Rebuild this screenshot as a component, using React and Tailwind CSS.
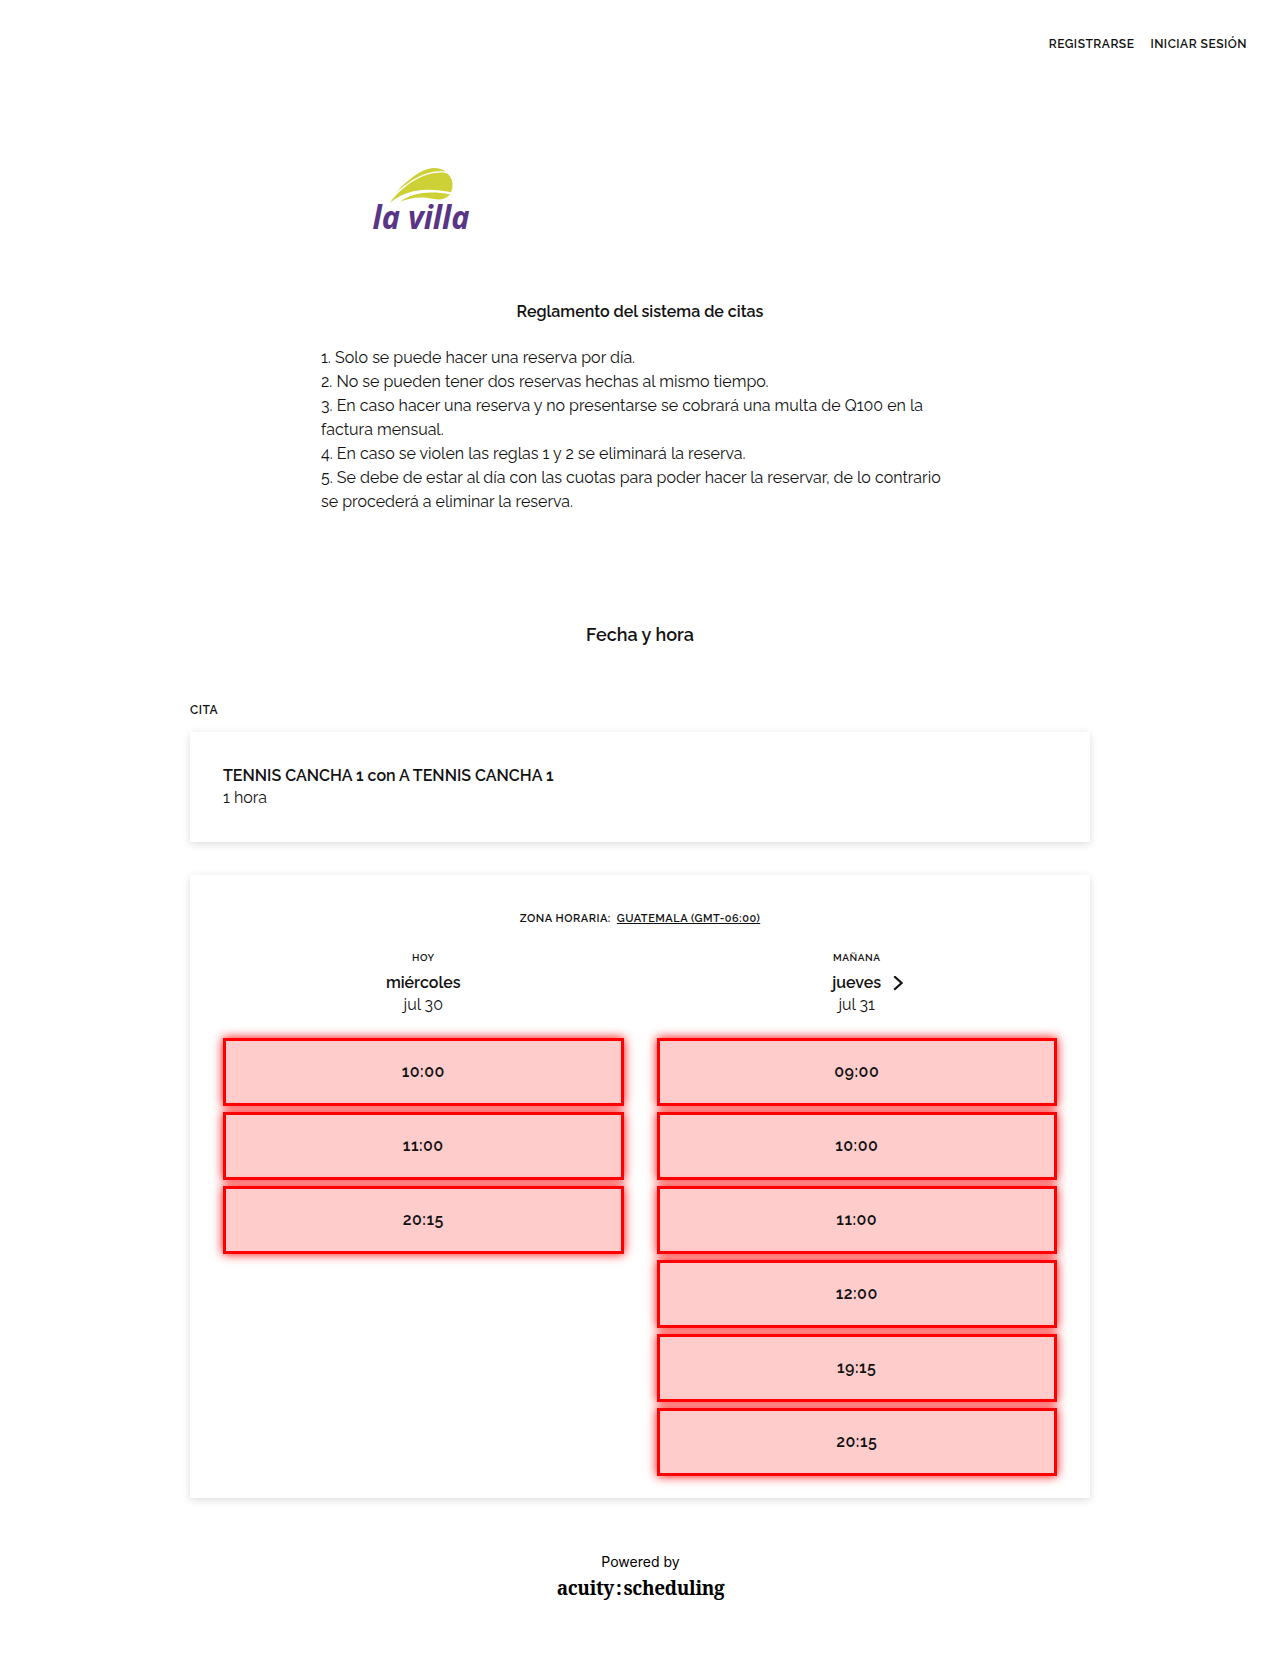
import React from "react";

const rules = [
  "1. Solo se puede hacer una reserva por día.",
  "2. No se pueden tener dos reservas hechas al mismo tiempo.",
  "3. En caso hacer una reserva y no presentarse se cobrará una multa de Q100 en la factura mensual.",
  "4. En caso se violen las reglas 1 y 2 se eliminará la reserva.",
  "5. Se debe de estar al día con las cuotas para poder hacer la reservar, de lo contrario se procederá a eliminar la reserva.",
];

const days = [
  { label: "HOY", name: "miércoles", date: "jul 30", times: ["10:00", "11:00", "20:15"] },
  {
    label: "MAÑANA",
    name: "jueves",
    date: "jul 31",
    times: ["09:00", "10:00", "11:00", "12:00", "19:15", "20:15"],
    next: true,
  },
];

function Logo() {
  return (
    <svg width="120" height="86" viewBox="0 0 120 86" className="block" aria-label="la villa">
      <g fill="#ced136">
        <path d="M19.500 38.300 C30 24 44 14 57 9.800 C65 7.300 73 6.800 77 8.300 C83 13 84 21 81 27.300 C70 25.300 58 23.600 45 26 C35 28 27 32 19.500 38.300Z" />
        <path d="M26 27.500 C35 17.500 45 9 56 4.500 C64 1.500 71 3 75.500 6.500 C65 5.500 57 7.500 48 12 C40 16 33 21.500 26 27.500Z" />
        <path d="M30 36.800 C42 28 58 25.500 80 29.200 C76 34.300 70 35.300 63 33.800 C50 31.200 40 33 30 36.800Z" />
      </g>
      <text
        x="2.500"
        y="63.500"
        textLength="97"
        lengthAdjust="spacingAndGlyphs"
        className="fill-[#5a3586] font-['Noto_Sans'] text-[31.500px] font-bold italic"
      >
        la villa
      </text>
    </svg>
  );
}

function Day({ day }) {
  return (
    <div className="min-w-0 flex-1">
      <div className="flex flex-col items-center text-center leading-[22px]">
        <div className="text-[10px] leading-[14px] font-semibold tracking-[0.5px]">{day.label}</div>
        <div className="relative mt-[7px] font-semibold">
          {day.name}
          {day.next && (
            <svg
              className="absolute top-[4px] left-full ml-[12px]"
              width="11"
              height="15"
              viewBox="0 0 11 15"
              fill="none"
              stroke="currentColor"
              strokeWidth="2.2"
            >
              <path d="M1.200 0.300 L8.600 7 L1.200 13.700" />
            </svg>
          )}
        </div>
        <div>{day.date}</div>
      </div>
      <div className="mt-[22px] flex flex-col gap-[6px]">
        {day.times.map((t) => (
          <button
            key={t}
            className="h-[68px] w-full border-[3px] border-[#f00] bg-[#ffcccc] text-center text-base font-semibold tracking-[0.5px] shadow-[0_0_10px_#f00]"
          >
            {t}
          </button>
        ))}
      </div>
    </div>
  );
}

export default function App() {
  return (
    <div className="h-[1659px] bg-white font-['Raleway',sans-serif] text-base text-[#121212]">
      <header className="flex h-[88px] justify-end gap-[16px] pt-[35px] pr-[18px] text-xs leading-[18px] font-semibold tracking-[0.5px]">
        <a>REGISTRARSE</a>
        <a>INICIAR SESIÓN</a>
      </header>

      <main className="ml-[190px] w-[900px]">
        <section className="ml-[131px] w-[638px] pt-[77px]">
          <div className="ml-[49px]">
            <Logo />
          </div>
          <h1 className="mt-[49px] text-center leading-6 font-semibold">Reglamento del sistema de citas</h1>
          <div className="mt-[22px] leading-6">
            {rules.map((r) => (
              <p key={r}>{r}</p>
            ))}
          </div>
        </section>

        <h2 className="mt-[107px] text-center text-lg leading-7 font-semibold">Fecha y hora</h2>

        <h3 className="mt-[52px] text-xs leading-[18px] font-semibold tracking-[0.5px]">CITA</h3>
        <section className="mt-[13px] h-[110px] rounded-[1px] px-[33px] pt-[33px] leading-[22px] shadow-[0_2px_8px_rgba(0,0,0,0.14)]">
          <p className="font-semibold">TENNIS CANCHA 1 con A TENNIS CANCHA 1</p>
          <p>1 hora</p>
        </section>

        <section className="mt-[33px] h-[623px] rounded-[1px] px-[33px] pt-[36px] shadow-[0_2px_8px_rgba(0,0,0,0.14)]">
          <div className="flex justify-center gap-[6px] text-[11px] leading-4 font-semibold tracking-[0.5px]">
            <span>ZONA HORARIA:</span>
            <a className="underline underline-offset-1">GUATEMALA (GMT-06:00)</a>
          </div>
          <div className="mt-[24px] flex gap-[33px]">
            {days.map((d) => (
              <Day key={d.label} day={d} />
            ))}
          </div>
        </section>

        <footer className="flex flex-col items-center pt-[54px] pl-px text-black">
          <span className="font-['Inter',sans-serif] text-sm leading-5">Powered by</span>
          <span className="mt-[2px] font-['Noto_Serif',serif] text-[19px] leading-7 font-bold tracking-[-0.35px]">
            acuity<span className="mx-[2px]">:</span>scheduling
          </span>
        </footer>
      </main>
    </div>
  );
}
